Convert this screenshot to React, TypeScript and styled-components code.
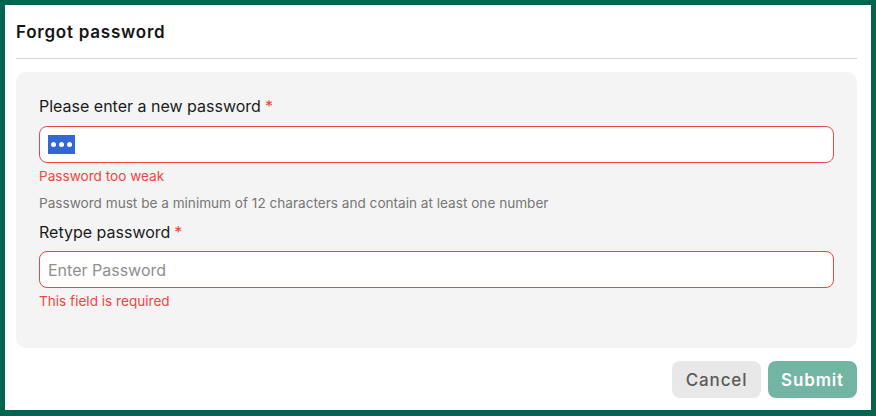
import React from 'react';
import styled, { createGlobalStyle } from 'styled-components';

const GlobalStyle = createGlobalStyle`
  html, body {
    margin: 0;
    padding: 0;
    background: #ffffff;
  }
  * {
    box-sizing: border-box;
  }
`;

const Frame = styled.div`
  width: 876px;
  height: 416px;
  border: 5px solid #00654f;
  border-bottom-width: 6px;
  background: #ffffff;
  padding: 0 14px 0 11px;
  font-family: Inter, 'Noto Sans', sans-serif;
`;

const Header = styled.div`
  padding: 14px 0 13px;
  border-bottom: 1px solid #d6d6d6;
`;

const Title = styled.h2`
  margin: 0;
  font-family: Inter, 'Noto Sans', sans-serif;
  font-size: 17px;
  line-height: 26px;
  font-weight: 600;
  letter-spacing: 0.045em;
  color: #161616;
`;

const Panel = styled.div`
  margin-top: 13px;
  background: #f4f4f4;
  border-radius: 10px;
  padding: 22px 23px 37px;
  display: flex;
  flex-direction: column;
`;

const Label = styled.label`
  font-size: 16px;
  line-height: 24px;
  color: #1c1c1c;
`;

const Required = styled.span`
  color: #ef4444;
  margin-left: 4px;
`;

const InputBox = styled.div<{ $gap: number }>`
  margin-top: ${p => p.$gap}px;
  height: 37px;
  border: 1px solid #ef4444;
  border-radius: 8px;
  background: #ffffff;
  padding: 0 8px;
  display: flex;
  align-items: center;
  font-size: 16px;
  color: #1c1c1c;
`;

const Placeholder = styled.span`
  color: #8f8f8f;
`;

const Selection = styled.span`
  display: inline-flex;
  align-items: center;
  justify-content: center;
  gap: 3px;
  width: 27px;
  height: 19px;
  background: #3367d4;
`;

const Dot = styled.span`
  width: 5px;
  height: 5px;
  border-radius: 50%;
  background: #ffffff;
`;

const ErrorText = styled.div`
  margin-top: 3px;
  font-size: 13.6px;
  line-height: 20px;
  color: #ef4444;
`;

const Hint = styled.div`
  margin-top: 7px;
  font-size: 13.6px;
  line-height: 20px;
  color: #767676;
`;

const SecondLabel = styled(Label)`
  margin-top: 7px;
`;

const Footer = styled.div`
  margin-top: 13px;
  display: flex;
  justify-content: flex-end;
  gap: 7px;
`;

const Button = styled.button<{ $primary?: boolean }>`
  width: 89px;
  height: 37px;
  border: none;
  border-radius: 8px;
  font-family: Inter, 'Noto Sans', sans-serif;
  font-size: 17px;
  font-weight: ${p => (p.$primary ? 600 : 500)};
  letter-spacing: 0.05em;
  background: ${p => (p.$primary ? '#72b5a3' : '#e8e8e8')};
  color: ${p => (p.$primary ? '#ffffff' : '#5a5a5a')};
  padding: 0;
`;

export default function App() {
  return (
    <>
      <GlobalStyle />
      <Frame>
        <Header>
          <Title>Forgot password</Title>
        </Header>
        <Panel>
          <Label>
            Please enter a new password<Required>*</Required>
          </Label>
          <InputBox $gap={8}>
            <Selection>
              <Dot />
              <Dot />
              <Dot />
            </Selection>
          </InputBox>
          <ErrorText>Password too weak</ErrorText>
          <Hint>Password must be a minimum of 12 characters and contain at least one number</Hint>
          <SecondLabel>
            Retype password<Required>*</Required>
          </SecondLabel>
          <InputBox $gap={7}>
            <Placeholder>Enter Password</Placeholder>
          </InputBox>
          <ErrorText>This field is required</ErrorText>
        </Panel>
        <Footer>
          <Button>Cancel</Button>
          <Button $primary>Submit</Button>
        </Footer>
      </Frame>
    </>
  );
}
